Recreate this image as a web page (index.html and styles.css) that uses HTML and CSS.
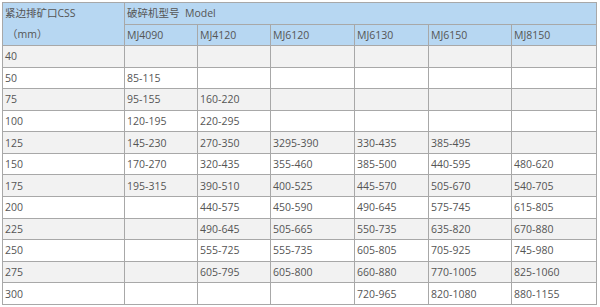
FILE: index.html
```html
<!DOCTYPE html>
<html lang="zh-CN">
<head>
    <meta charset="UTF-8">
    <title>破碎机型号 Model</title>
    <link rel="stylesheet" href="styles.css">
</head>
<body>
    <table class="spec">
        <colgroup>
            <col class="c-css">
            <col class="c-a">
            <col class="c-b">
            <col class="c-c">
            <col class="c-d">
            <col class="c-e">
            <col class="c-f">
        </colgroup>
        <thead>
            <tr>
                <th rowspan="2" class="css-head">紧边排矿口CSS<br><span class="unit">（mm）</span></th>
                <th colspan="6">破碎机型号&nbsp; Model</th>
            </tr>
            <tr>
                <th>MJ4090</th>
                <th>MJ4120</th>
                <th>MJ6120</th>
                <th>MJ6130</th>
                <th>MJ6150</th>
                <th>MJ8150</th>
            </tr>
        </thead>
        <tbody>
            <tr><td>40</td><td></td><td></td><td></td><td></td><td></td><td></td></tr>
            <tr><td>50</td><td>85-115</td><td></td><td></td><td></td><td></td><td></td></tr>
            <tr><td>75</td><td>95-155</td><td>160-220</td><td></td><td></td><td></td><td></td></tr>
            <tr><td>100</td><td>120-195</td><td>220-295</td><td></td><td></td><td></td><td></td></tr>
            <tr><td>125</td><td>145-230</td><td>270-350</td><td>3295-390</td><td>330-435</td><td>385-495</td><td></td></tr>
            <tr><td>150</td><td>170-270</td><td>320-435</td><td>355-460</td><td>385-500</td><td>440-595</td><td>480-620</td></tr>
            <tr><td>175</td><td>195-315</td><td>390-510</td><td>400-525</td><td>445-570</td><td>505-670</td><td>540-705</td></tr>
            <tr><td>200</td><td></td><td>440-575</td><td>450-590</td><td>490-645</td><td>575-745</td><td>615-805</td></tr>
            <tr><td>225</td><td></td><td>490-645</td><td>505-665</td><td>550-735</td><td>635-820</td><td>670-880</td></tr>
            <tr><td>250</td><td></td><td>555-725</td><td>555-735</td><td>605-805</td><td>705-925</td><td>745-980</td></tr>
            <tr><td>275</td><td></td><td>605-795</td><td>605-800</td><td>660-880</td><td>770-1005</td><td>825-1060</td></tr>
            <tr><td>300</td><td></td><td></td><td></td><td>720-965</td><td>820-1080</td><td>880-1155</td></tr>
        </tbody>
    </table>
</body>
</html>
```

FILE: styles.css
```css
body {
    margin: 2px;
    background: #ffffff;
    font-family: "Open Sans", "Noto Sans CJK SC", sans-serif;
    font-size: 10.5px;
    color: #555;
}
.spec {
    border-collapse: collapse;
    table-layout: fixed;
    width: 594px;
    height: 302px;
    border: 1px solid #6e6e6e;
}
.c-css { width: 122px; }
.c-a { width: 73px; }
.c-b { width: 73px; }
.c-c { width: 84px; }
.c-d { width: 74px; }
.c-e { width: 83px; }
.c-f { width: 85px; }
tr {
    height: 21px;
}
th, td {
    border: 1px solid #a8a8a8;
    padding: 0 2px;
    text-align: left;
    font-weight: normal;
    white-space: nowrap;
    line-height: 12px;
}
th {
    background: #b7d7f2;
}
.css-head {
    vertical-align: middle;
    line-height: 21px;
}
.unit {
    padding-left: 2px;
}
tbody tr:nth-child(odd) td {
    background: #f2f2f2;
}
tbody tr:nth-child(even) td {
    background: #ffffff;
}
```
